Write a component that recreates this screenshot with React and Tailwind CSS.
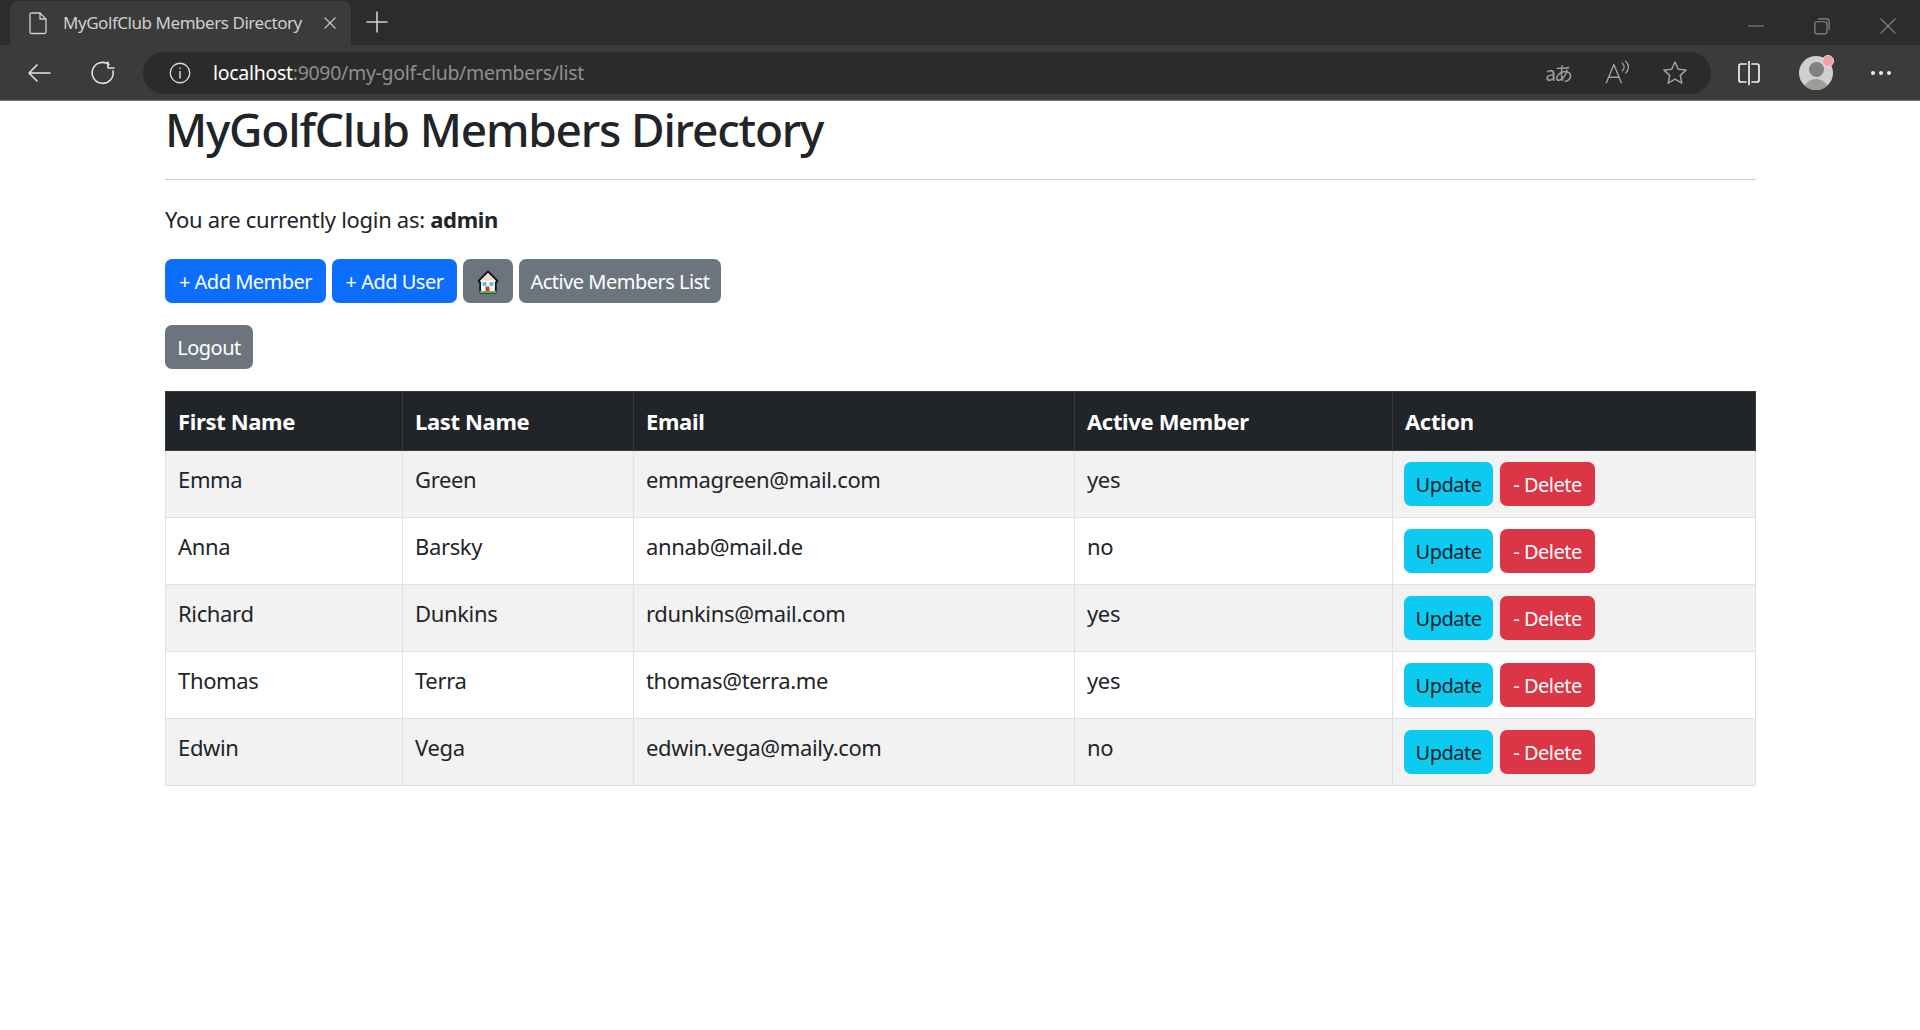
import React from 'react';

const members = [
    { first: 'Emma', last: 'Green', email: 'emmagreen@mail.com', active: 'yes' },
    { first: 'Anna', last: 'Barsky', email: 'annab@mail.de', active: 'no' },
    { first: 'Richard', last: 'Dunkins', email: 'rdunkins@mail.com', active: 'yes' },
    { first: 'Thomas', last: 'Terra', email: 'thomas@terra.me', active: 'yes' },
    { first: 'Edwin', last: 'Vega', email: 'edwin.vega@maily.com', active: 'no' },
];

function Icon({ className, size = 28, children }) {
    return (
        <svg width={size} height={size} viewBox="0 0 28 28" fill="none" stroke="currentColor" strokeWidth="1.5" strokeLinecap="round" strokeLinejoin="round" className={className}>
            {children}
        </svg>
    );
}

function HomeEmoji() {
    return (
        <svg width="22" height="24" viewBox="0 0 22 24">
            <path d="M11 1.500 L20.500 11 L18.800 12.500 V22.500 H3.200 V12.500 L1.500 11 Z" fill="#fff" stroke="#111" strokeWidth="1.800" strokeLinejoin="round" />
            <path d="M11 3.500 L18 10.500 H4 Z" fill="#f3d9c4" />
            <rect x="5.500" y="12" width="4" height="4" fill="#5bc4ea" />
            <rect x="12.500" y="12" width="4" height="4" fill="#5bc4ea" />
            <rect x="8.500" y="16.500" width="4" height="5.500" fill="#e0352b" />
            <rect x="2.500" y="21" width="17" height="2" fill="#58b947" />
        </svg>
    );
}

function Browser() {
    return (
        <div className="h-[101px] bg-[#3b3b3b] text-[#d0d0d0]">
            <div className="h-[45px] bg-[#2c2c2c] flex items-end">
                <div className="ml-[10px] w-[341px] h-[44px] bg-[#3b3b3b] rounded-t-lg flex items-center pl-[14px] pr-[12px]">
                    <Icon size={28}>
                        <path d="M8 4h8l6 6v13a1.500 1.500 0 0 1-1.500 1.500h-13A1.500 1.500 0 0 1 6 23V5.500A1.500 1.500 0 0 1 8 4z M16 4v6h6" strokeWidth="1.300" />
                    </Icon>
                    <span className="ml-[11px] text-[17px] tracking-[-0.450px] text-[#cfcfcf] whitespace-nowrap flex-1">MyGolfClub Members Directory</span>
                    <Icon size={18}>
                        <path d="M6 6l16 16M22 6L6 22" strokeWidth="2" />
                    </Icon>
                </div>
                <div className="ml-[12px] mb-[9px] text-[#cfcfcf]">
                    <Icon size={28}>
                        <path d="M14 4v20M4 14h20" strokeWidth="1.600" />
                    </Icon>
                </div>
                <div className="ml-auto flex items-center gap-[46px] pr-[22px] mb-[9px] text-[#8c8c8c]">
                    <Icon size={20}><path d="M3 14h22" strokeWidth="1.400" /></Icon>
                    <Icon size={20}>
                        <rect x="4" y="8" width="17" height="17" rx="3" strokeWidth="1.600" />
                        <path d="M9 4h11a4 4 0 0 1 4 4v11" strokeWidth="1.600" />
                    </Icon>
                    <Icon size={20}><path d="M4 4l20 20M24 4L4 24" strokeWidth="1.500" /></Icon>
                </div>
            </div>
            <div className="h-[55px] flex items-center pl-[25px] pr-[24px]">
                <Icon size={28} className="text-[#e4e4e4]"><path d="M25 14H4M12 6l-8 8 8 8" strokeWidth="1.600" /></Icon>
                <Icon size={28} className="ml-[36px] text-[#e4e4e4]"><path d="M20 5.500A10.500 10.500 0 1 0 24 12M19 3v6h6" strokeWidth="1.600" /></Icon>
                <div className="ml-[26px] w-[1568px] h-[42px] rounded-full bg-[#2b2b2b] flex items-center pl-[24px] pr-[22px]">
                    <Icon size={26} className="text-[#dcdcdc]">
                        <circle cx="14" cy="14" r="10.500" strokeWidth="1.400" />
                        <path d="M14 12.500v7M14 8.500v.5" strokeWidth="1.600" />
                    </Icon>
                    <span className="ml-[20px] text-[19.500px] tracking-[-0.300px] whitespace-nowrap">
                        <span className="text-white">localhost</span>
                        <span className="text-[#8f8f8f]">:9090/my-golf-club/members/list</span>
                    </span>
                    <div className="ml-auto flex items-center gap-[30px] text-[#a0a0a0]">
                        <span className="text-[19px] leading-none tracking-[-2px] whitespace-nowrap" style={{ fontFamily: '"Noto Sans CJK JP", sans-serif' }}>aあ</span>
                        <Icon size={30}>
                            <path d="M5 23L12 6l7 17M7.500 18h9M20 5c2 2 2 5 0 7M23 3c3.500 3 3.500 8 0 11" strokeWidth="1.300" />
                        </Icon>
                        <Icon size={28}>
                            <path d="M14 3l3.300 7.200 7.700.9-5.700 5.300 1.500 7.700L14 20.200 7.200 24.100l1.500-7.700L3 11.100l7.700-.9z" strokeWidth="1.500" />
                        </Icon>
                    </div>
                </div>
                <Icon size={28} className="ml-[24px] text-[#f0f0f0]">
                    <path d="M11 5H6a2 2 0 0 0-2 2v14a2 2 0 0 0 2 2h5M17 5h5a2 2 0 0 1 2 2v14a2 2 0 0 1-2 2h-5M14 2.500v23" strokeWidth="1.700" />
                </Icon>
                <div className="relative ml-[36px] w-[34px] h-[34px] rounded-full bg-[#cfcfcf] overflow-hidden">
                    <div className="mx-auto mt-[6px] w-[15px] h-[15px] rounded-full bg-[#808080]" />
                    <div className="mx-auto mt-[2px] w-[26px] h-[16px] rounded-t-full bg-[#a09c98]" />
                </div>
                <div className="relative -ml-[11px] -mt-[24px] w-[12px] h-[12px] rounded-full bg-[#f4a0a0] border border-[#e0e0e0]" />
                <div className="ml-[37px] flex gap-[4px]">
                    <div className="w-[4px] h-[4px] rounded-full bg-[#f0f0f0]" />
                    <div className="w-[4px] h-[4px] rounded-full bg-[#f0f0f0]" />
                    <div className="w-[4px] h-[4px] rounded-full bg-[#f0f0f0]" />
                </div>
            </div>
            <div className="h-px bg-[#777]" />
        </div>
    );
}

function Btn({ color, className = '', children }) {
    return (
        <button type="button" className={`${color} h-[44px] rounded-[7px] text-[20px] tracking-[-0.500px] pt-[2px] flex items-center justify-center whitespace-nowrap ${className}`}>
            {children}
        </button>
    );
}

function App() {
    return (
        <div className="min-h-[1030px] bg-white text-[#212529]" style={{ fontFamily: '"Noto Sans", sans-serif' }}>
            <Browser />
            <div className="w-[1591px] ml-[165px]">
                <h1 className="text-[46px] leading-[56px] font-medium tracking-[-1.200px] whitespace-nowrap">MyGolfClub Members Directory</h1>
                <hr className="mt-[22px] border-[#c8c9ca]" />
                <p className="mt-[24px] text-[22px] leading-[30px] tracking-[-0.300px]">You are currently login as: <b className="font-bold">admin</b></p>
                <div className="mt-[25px] flex gap-[6px]">
                    <Btn color="bg-[#0d6efd] text-white" className="w-[161px]">+ Add Member</Btn>
                    <Btn color="bg-[#0d6efd] text-white" className="w-[125px]">+ Add User</Btn>
                    <Btn color="bg-[#6c757d] text-white" className="w-[50px]"><HomeEmoji /></Btn>
                    <Btn color="bg-[#6c757d] text-white" className="w-[202px]">Active Members List</Btn>
                </div>
                <div className="mt-[22px] flex">
                    <Btn color="bg-[#6c757d] text-white" className="w-[88px]">Logout</Btn>
                </div>
                <table className="mt-[22px] w-full border-collapse table-fixed text-[22px] tracking-[-0.350px]">
                    <colgroup>
                        <col className="w-[237px]" />
                        <col className="w-[231px]" />
                        <col className="w-[441px]" />
                        <col className="w-[318px]" />
                        <col />
                    </colgroup>
                    <thead>
                        <tr className="h-[59px] bg-[#212529] text-white text-left">
                            {['First Name', 'Last Name', 'Email', 'Active Member', 'Action'].map((h) => (
                                <th key={h} className="border border-[#373b3e] px-[12px] font-bold">{h}</th>
                            ))}
                        </tr>
                    </thead>
                    <tbody>
                        {members.map((m, i) => (
                            <tr key={m.email} className={`h-[67px] ${i % 2 === 0 ? 'bg-[#f2f2f2]' : 'bg-white'}`}>
                                <td className="border border-[#dee2e6] px-[12px] pb-[10px]">{m.first}</td>
                                <td className="border border-[#dee2e6] px-[12px] pb-[10px]">{m.last}</td>
                                <td className="border border-[#dee2e6] px-[12px] pb-[10px]">{m.email}</td>
                                <td className="border border-[#dee2e6] px-[12px] pb-[10px]">{m.active}</td>
                                <td className="border border-[#dee2e6] px-[11px]">
                                    <div className="flex gap-[7px]">
                                        <Btn color="bg-[#0dcaf0] text-[#0b1f2a]" className="w-[89px]">Update</Btn>
                                        <Btn color="bg-[#dc3545] text-white" className="w-[95px]">- Delete</Btn>
                                    </div>
                                </td>
                            </tr>
                        ))}
                    </tbody>
                </table>
            </div>
        </div>
    );
}

export default App;
